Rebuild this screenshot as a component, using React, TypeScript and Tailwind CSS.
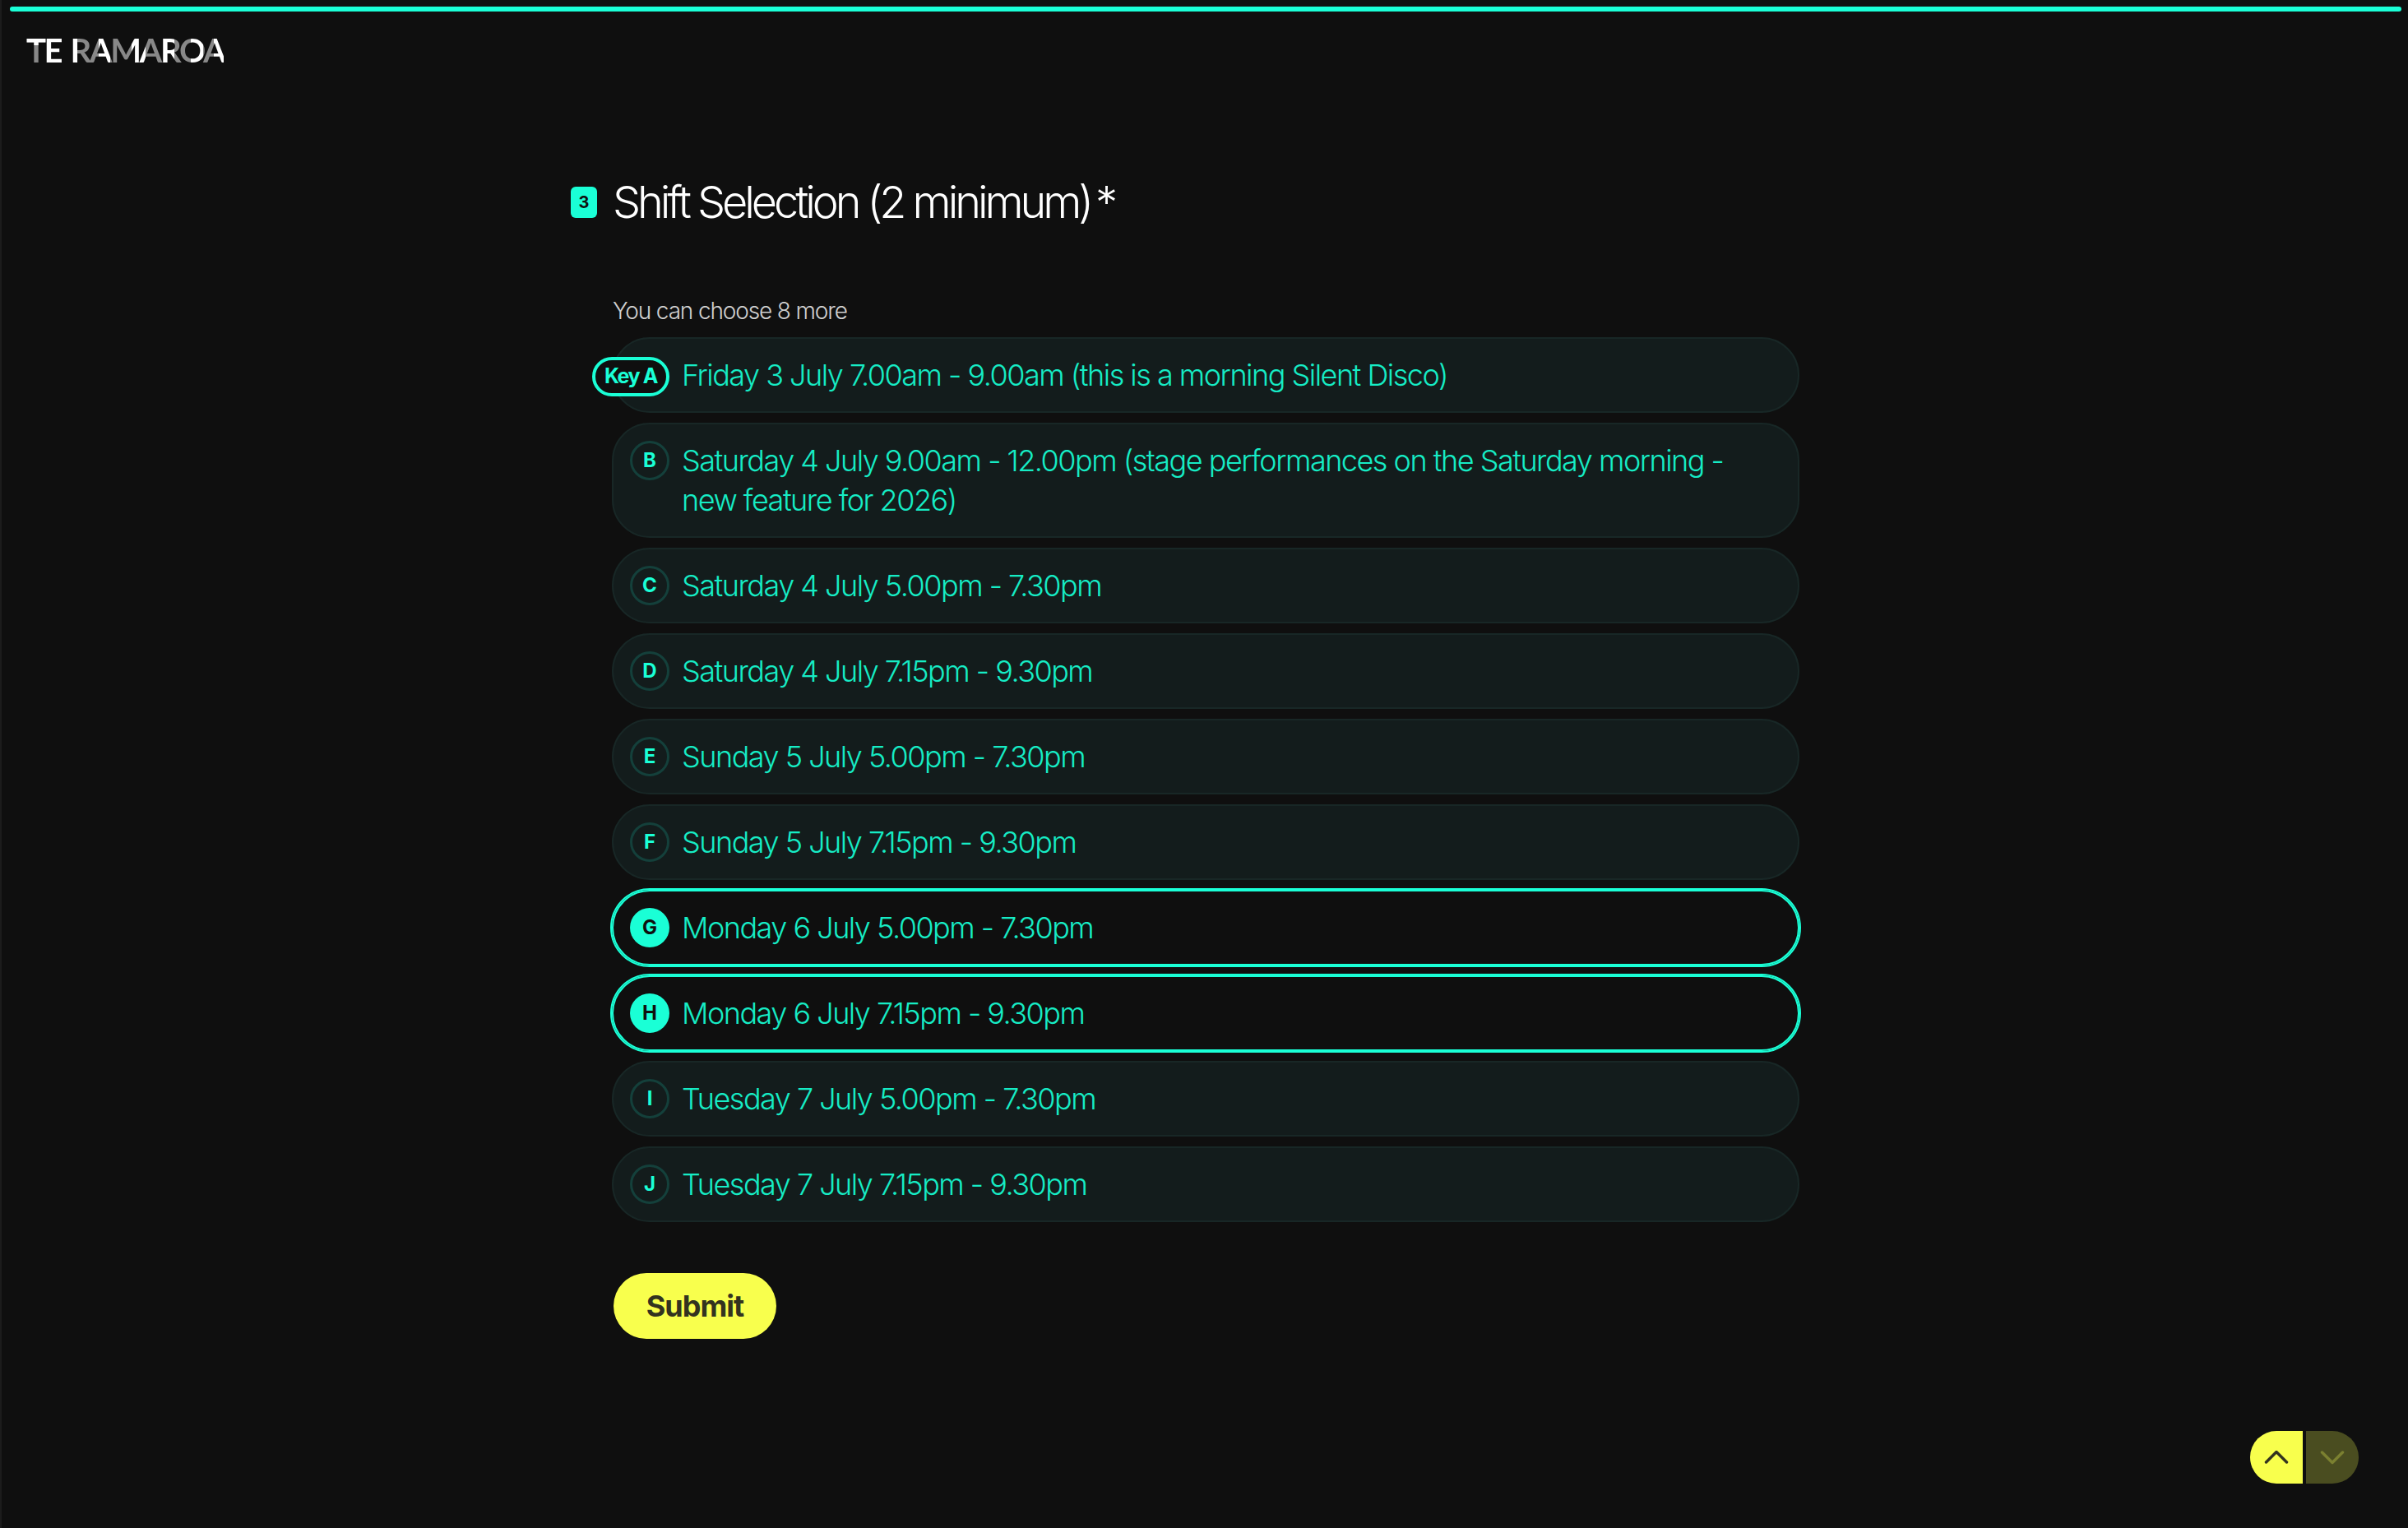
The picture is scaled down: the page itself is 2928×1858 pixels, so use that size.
const shifts = [
  { key: "A", label: "Friday 3 July 7.00am - 9.00am (this is a morning Silent Disco)", hint: true },
  { key: "B", label: "Saturday 4 July 9.00am - 12.00pm (stage performances on the Saturday morning - new feature for 2026)" },
  { key: "C", label: "Saturday 4 July 5.00pm - 7.30pm" },
  { key: "D", label: "Saturday 4 July 7.15pm - 9.30pm" },
  { key: "E", label: "Sunday 5 July 5.00pm - 7.30pm" },
  { key: "F", label: "Sunday 5 July 7.15pm - 9.30pm" },
  { key: "G", label: "Monday 6 July 5.00pm - 7.30pm", selected: true },
  { key: "H", label: "Monday 6 July 7.15pm - 9.30pm", selected: true },
  { key: "I", label: "Tuesday 7 July 5.00pm - 7.30pm" },
  { key: "J", label: "Tuesday 7 July 7.15pm - 9.30pm" },
];

function Option({ item }: { item: (typeof shifts)[number] }) {
  const box = item.selected
    ? "bg-[#0f0f0f] border-[#1affd6] outline-2 outline-[#1affd6] border-2"
    : "bg-[#131c1c] border-[#182726] border-2";
  return (
    <div className={`relative flex items-start w-[1444px] rounded-[46px] py-[20px] pl-[20px] pr-[56px] ${box}`}>
      {item.hint ? (
        <div className="absolute left-[-26px] top-[22px] h-[48px] w-[94px] rounded-full border-[4px] border-[#1affd6] bg-[#0f0f0f] flex items-center justify-center text-[25px] font-bold tracking-[-1.4px] text-[#1affd6]">
          Key A
        </div>
      ) : (
        <div
          className={`shrink-0 w-[48px] h-[48px] rounded-full flex items-center justify-center text-[24px] font-bold ${
            item.selected ? "bg-[#1affd6] text-[#0f0f0f]" : "border-[3px] border-[#14403b] text-[#1affd6]"
          }`}
        >
          {item.key}
        </div>
      )}
      <div className={`text-[36px] leading-[48px] font-light tracking-[-1.5px] text-[#16ecc5] ${item.hint ? "ml-[63px]" : "ml-[15px]"}`}>
        {item.label}
      </div>
    </div>
  );
}

export default function App() {
  return (
    <div className="relative w-[2928px] h-[1858px] bg-[#0f0f0f] font-['Inter',sans-serif] overflow-hidden border-l-2 border-[#1c1c1c]">
      <div className="ml-[10px] mr-[8px] mt-[8px] h-[6px] rounded-full bg-[#1affd6]" />
      <div className="ml-[30px] mt-[27px] w-[240px] whitespace-nowrap text-[40px] leading-[40px] font-bold tracking-[-2.4px] [word-spacing:4px] font-['Lato',sans-serif] text-transparent bg-clip-text bg-[linear-gradient(#fff,#fff),linear-gradient(90deg,#888_0px,#888_24px,#fff_24px,#fff_62px,#888_62px,#888_88px,#fff_88px,#fff_102px,#888_102px,#888_128px,#fff_128px,#fff_145px,#888_145px,#888_165px,#fff_165px,#fff_180px,#888_180px,#888_200px,#fff_200px,#fff_215px,#888_215px,#888_228px,#fff_228px,#fff_240px)] bg-no-repeat bg-[length:24px_14px,100%_100%]">
        TE RAMAROA
      </div>

      <div className="ml-[692px] mt-[129px] flex items-center h-[72px]">
        <div className="w-[32px] h-[38px] rounded-[6px] bg-[#1affd6] flex items-center justify-center text-[20px] font-bold text-[#0f0f0f]">3</div>
        <h1 className="ml-[19px] text-[54px] leading-[72px] font-light tracking-[-4.05px] text-white">
          Shift Selection (2 minimum)<span className="ml-[6px]">*</span>
        </h1>
      </div>

      <div className="ml-[743px] mt-[78px] text-[28px] leading-[36px] font-light tracking-[-1.15px] text-[#d0d0d0]">You can choose 8 more</div>

      <div className="ml-[742px] mt-[14px] flex flex-col gap-[12px]">
        {shifts.map((s) => (
          <Option key={s.key} item={s} />
        ))}
      </div>

      <button className="ml-[744px] mt-[62px] w-[198px] h-[80px] rounded-full bg-[#f8ff4d] text-[#33331f] text-[36px] font-bold tracking-[-1px]">
        Submit
      </button>

      <div className="absolute left-[2734px] top-[1740px] flex gap-[4px]">
        <div className="w-[64px] h-[64px] rounded-l-[32px] bg-[#f8ff4d] flex items-center justify-center">
          <svg width="32" height="32" viewBox="0 0 32 32" fill="none" stroke="#33331f" strokeWidth="3.5" strokeLinecap="round" strokeLinejoin="round">
            <path d="M3.5 22 L16 9.5 L28.5 22" />
          </svg>
        </div>
        <div className="w-[64px] h-[64px] rounded-r-[32px] bg-[#4a4d20] flex items-center justify-center">
          <svg width="32" height="32" viewBox="0 0 32 32" fill="none" stroke="#7b8030" strokeWidth="3.5" strokeLinecap="round" strokeLinejoin="round">
            <path d="M3.5 10 L16 22.5 L28.5 10" />
          </svg>
        </div>
      </div>
    </div>
  );
}
